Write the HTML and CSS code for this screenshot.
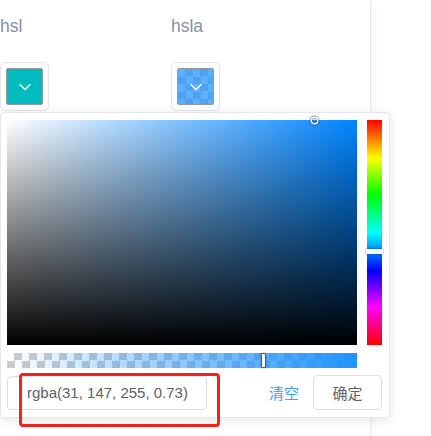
FILE: index.html
```html
<!DOCTYPE html>
<html lang="en">
<head>
    <meta charset="UTF-8">
    <title>Color picker</title>
    <meta name="viewport" content="width=device-width, initial-scale=1.0">
    <link rel="stylesheet" href="styles.css">
</head>
<body>
    <div class="card">
        <div class="block-row">
            <div class="block">
                <span class="demonstration">hsl</span>
                <div class="picker-trigger">
                    <span class="picker-color solid">
                        <svg class="arrow" width="14" height="8" viewBox="0 0 14 8"><path d="M1.5 1.2l5.5 5.3 5.5-5.3" stroke="#fff" stroke-width="1.4" fill="none"/></svg>
                    </span>
                </div>
            </div>
            <div class="block">
                <span class="demonstration">hsla</span>
                <div class="picker-trigger">
                    <span class="picker-color alpha">
                        <span class="picker-fill"></span>
                        <svg class="arrow" width="14" height="8" viewBox="0 0 14 8"><path d="M1.5 1.2l5.5 5.3 5.5-5.3" stroke="#fff" stroke-width="1.4" fill="none"/></svg>
                    </span>
                </div>
            </div>
        </div>
    </div>

    <!-- Color dropdown -->
    <div class="color-dropdown">
        <div class="dropdown-main">
            <div class="sv-panel">
                <div class="sv-white"></div>
                <div class="sv-black"></div>
                <div class="sv-cursor"></div>
            </div>
            <div class="hue-slider">
                <div class="hue-thumb"></div>
            </div>
        </div>
        <div class="alpha-slider">
            <div class="alpha-bar"></div>
            <div class="alpha-thumb"></div>
        </div>
        <div class="dropdown-btns">
            <div class="value-input">rgba(31, 147, 255, 0.73)</div>
            <div class="btn-group">
                <span class="link-btn">清空</span>
                <button class="plain-btn">确定</button>
            </div>
        </div>
    </div>

    <!-- highlight box -->
    <div class="mark"></div>
</body>
</html>
```

FILE: styles.css
```css
body {
    margin: 0;
    background: #fff;
    font-family: "Liberation Sans", Arial, "Noto Sans CJK SC", sans-serif;
    color: #606266;
    width: 431px;
    height: 436px;
    overflow: hidden;
    position: relative;
}
.card {
    width: 371px;
    height: 436px;
    border-right: 1px solid #e9e9ee;
    box-shadow: 3px 0 6px rgba(0,0,0,0.03);
    box-sizing: border-box;
}
.block-row {
    display: flex;
    padding-top: 15px;
}
.block {
    width: 171px;
    display: flex;
    flex-direction: column;
    align-items: flex-start;
}
.demonstration {
    font-size: 17.5px;
    line-height: 22px;
    color: #8492a6;
}
.picker-trigger {
    margin-top: 25px;
    width: 49px;
    height: 49px;
    box-sizing: border-box;
    border: 1px solid #e6e6e6;
    border-radius: 5px;
    padding: 5px;
}
.picker-color {
    position: relative;
    display: flex;
    align-items: center;
    justify-content: center;
    width: 37px;
    height: 37px;
    box-sizing: border-box;
    border: 1px solid #999;
    border-radius: 2px;
}
.picker-color.solid {
    background: rgb(0, 188, 190);
}
.picker-color.alpha {
    background-color: #fff;
    background-image: conic-gradient(#ccc 25%, #fff 0 50%, #ccc 0 75%, #fff 0);
    background-size: 15px 15px;
}
.picker-fill {
    position: absolute;
    inset: 0;
    background: rgba(31, 147, 255, 0.73);
}
.arrow {
    position: relative;
}

/* Dropdown */
.color-dropdown {
    position: absolute;
    left: 0;
    top: 112px;
    width: 390px;
    height: 306px;
    box-sizing: border-box;
    padding: 7px 7px 7px 6px;
    background: #fff;
    border: 1px solid #e4e7ed;
    border-radius: 4px;
    box-shadow: 0 2px 12px rgba(0,0,0,0.1);
}
.dropdown-main {
    display: flex;
    gap: 10px;
}
.sv-panel {
    position: relative;
    width: 350px;
    height: 225px;
    background: rgb(0, 132, 255);
}
.sv-white {
    position: absolute;
    inset: 0;
    background: linear-gradient(to right, #fff, rgba(255,255,255,0));
}
.sv-black {
    position: absolute;
    inset: 0;
    background: linear-gradient(to bottom, rgba(0,0,0,0), #000);
}
.sv-cursor {
    position: absolute;
    left: 305px;
    top: -2px;
    width: 5px;
    height: 5px;
    border-radius: 50%;
    box-shadow: 0 0 0 1.5px #fff, inset 0 0 1px 1px rgba(0,0,0,0.3), 0 0 1px 2.5px rgba(0,0,0,0.4);
}
.hue-slider {
    position: relative;
    width: 15px;
    height: 225px;
    background: linear-gradient(to bottom, #f00 0%, #ff0 17%, #0f0 33%, #0ff 50%, #00f 67%, #f0f 83%, #f00 100%);
}
.hue-thumb {
    position: absolute;
    left: -1px;
    right: -1px;
    top: 129px;
    height: 5px;
    background: #fff;
    border-radius: 1px;
    box-shadow: 0 0 2px rgba(0,0,0,0.6);
}
.alpha-slider {
    position: relative;
    margin-top: 8px;
    width: 350px;
    height: 15px;
    background-color: #fff;
    background-image: conic-gradient(#ccc 25%, #fff 0 50%, #ccc 0 75%, #fff 0);
    background-size: 15px 15px;
}
.alpha-bar {
    position: absolute;
    inset: 0;
    background: linear-gradient(to right, rgba(31,147,255,0), rgb(31,147,255));
}
.alpha-thumb {
    position: absolute;
    left: 254px;
    top: 0;
    width: 5px;
    height: 15px;
    box-sizing: border-box;
    background: #fff;
    border: 1px solid #e0201a;
    border-radius: 1px;
    box-shadow: 0 0 2px rgba(0,0,0,0.4);
}
.dropdown-btns {
    margin-top: 7px;
    display: flex;
    justify-content: space-between;
    align-items: center;
}
.value-input {
    width: 200px;
    height: 34px;
    box-sizing: border-box;
    border: 1px solid #dcdfe6;
    border-radius: 4px;
    padding-left: 19px;
    font-size: 15px;
    line-height: 32px;
    color: #606266;
}
.btn-group {
    display: flex;
    align-items: center;
}
.link-btn {
    font-size: 15px;
    color: #409eff;
    margin-right: 14px;
}
.plain-btn {
    width: 69px;
    height: 35px;
    border: 1px solid #dcdfe6;
    border-radius: 4px;
    background: #fff;
    font-family: inherit;
    font-size: 15px;
    color: #606266;
    padding: 0;
}
.mark {
    position: absolute;
    left: 19px;
    top: 373px;
    width: 201px;
    height: 54px;
    box-sizing: border-box;
    border: 3px solid #f0241c;
    border-radius: 4px;
}
```
